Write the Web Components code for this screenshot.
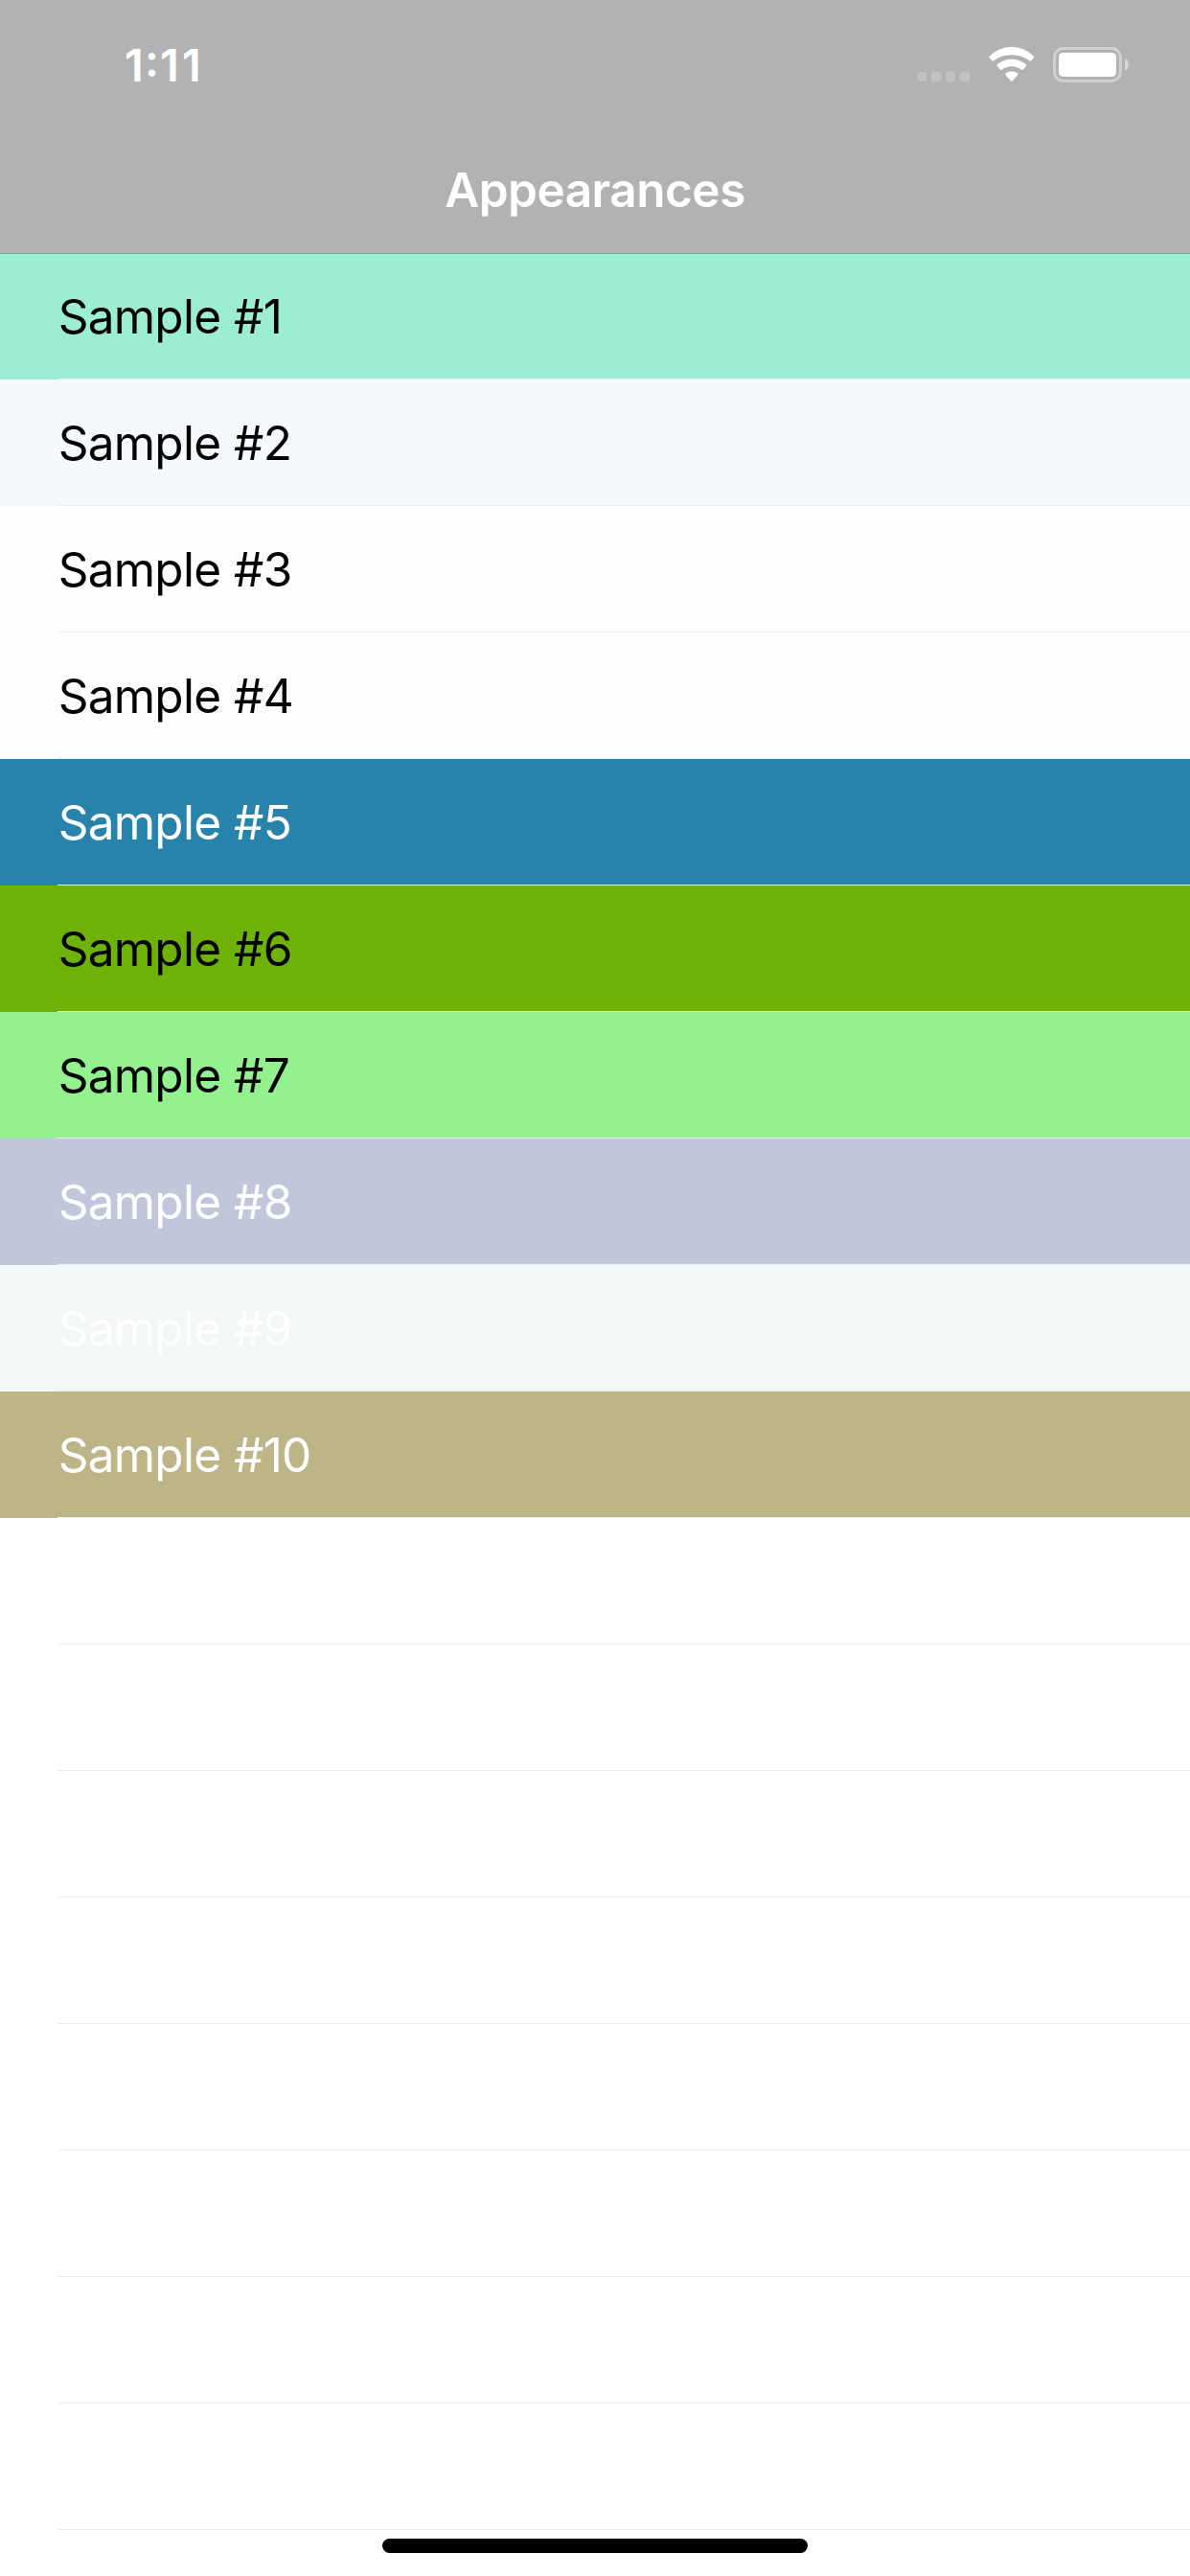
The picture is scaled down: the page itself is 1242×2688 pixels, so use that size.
<!DOCTYPE html>
<html lang="en">
<head>
<meta charset="utf-8">
<title>Appearances</title>
<style>
html,body{margin:0;height:100%;background:#fff}
body{font-family:Inter,"Liberation Sans",sans-serif}
</style>
</head>
<body>
<app-screen></app-screen>
<script>
const define = (name, html, setup) => customElements.define(name, class extends HTMLElement {
  connectedCallback() {
    if (this.shadowRoot) return;
    this.attachShadow({mode: 'open'}).innerHTML = html;
    if (setup) setup(this, this.shadowRoot);
  }
});

define('signal-dots', `<style>:host{display:flex;gap:5px}i{width:10px;height:10px;border-radius:3px;background:#c1c1c1}</style><i></i><i></i><i></i><i></i>`);

define('wifi-icon', `<style>:host{display:block;width:48px;height:37px}svg{display:block}</style>
<svg width="48" height="37" viewBox="0 0 48 37" fill="#fff" stroke="#fff" stroke-width="2" stroke-linejoin="round">
<path d="M1.2 10.4C14.2-2.1 33.4-2.1 46.4 10.4L43.3 13.8C32.2 4.9 15.4 4.9 4.3 13.8Z"/>
<path d="M9.4 19.1C17.6 12 30 12 38.2 19.1L35 23.1C28.2 18 19.4 18 12.6 23.1Z"/>
<path d="M18 28.3C21.2 25.8 26.4 25.8 29.6 28.3Q27.6 31.4 23.8 34.7Q20 31.4 18 28.3Z"/></svg>`);

define('battery-icon', `<style>:host{display:block;width:79px;height:37px}svg{display:block}</style>
<svg width="79" height="37" viewBox="0 0 79 37">
<rect x="1.5" y="1.5" width="69" height="34" rx="9.5" fill="none" stroke="#d0d0d0" stroke-width="3"/>
<rect x="6" y="6" width="60" height="25" rx="4.5" fill="#fff"/>
<path d="M75 12C80.3 14.3 80.3 22.7 75 25Z" fill="#d8d8d8"/></svg>`);

define('status-bar', `<style>
:host{display:flex;height:132px;box-sizing:border-box;padding:49px 64px 0 130px;align-items:flex-start;color:#fff}
time{font-size:46.8px;line-height:56px;height:37px;display:flex;align-items:center;font-weight:600;flex:1}
.hour{letter-spacing:1.1px}.min{letter-spacing:3.2px}.colon{position:relative;top:-5px}
signal-dots{margin:26px 20px 0 0}wifi-icon{margin-right:19.3px}
</style><time><span><span class="hour">1<span class="colon">:</span></span><span class="min">11</span></span></time><signal-dots></signal-dots><wifi-icon></wifi-icon><battery-icon></battery-icon>`);

define('nav-bar', `<style>
:host{display:flex;height:132px;align-items:center;justify-content:center;color:#fff}
h1{margin:0;font-size:49.5px;line-height:60px;font-weight:600;letter-spacing:-.5px}
</style><h1><slot></slot></h1>`);

define('top-bar', `<style>
:host{display:block;height:265px;margin-bottom:-1px;position:relative;box-sizing:border-box;background:linear-gradient(#b2b2b2,#b2b2b2) 0 0/100% 264px no-repeat;border-bottom:1px solid rgba(0,0,0,.3)}
</style><status-bar></status-bar><nav-bar>Appearances</nav-bar>`);

define('table-row', `<style>
:host{display:flex;height:132px;padding-left:60px;background:var(--bg,#fff);color:var(--ink,#000)}
div{flex:1;box-sizing:border-box;padding:36px 0 0 .7px;border-bottom:1px solid #ededed;font-size:49.5px;line-height:60px;letter-spacing:-.75px;word-spacing:.6px}
</style><div><slot></slot></div>`, (el) => {
  if (el.getAttribute('bg')) el.style.setProperty('--bg', el.getAttribute('bg'));
  if (el.getAttribute('ink')) el.style.setProperty('--ink', el.getAttribute('ink'));
});

define('home-indicator', `<style>:host{display:block;position:absolute;left:50%;bottom:24px;width:444px;height:15px;margin-left:-222px;border-radius:7.5px;background:#000}</style>`);

const samples = [['#9beed4','#000'],['#f4f9fc','#000'],['#fefefe','#000'],['#fdfdfd','#000'],['#2783aa','#fff'],['#6eb206','#000'],['#93f190','#000'],['#c2c6da','#fff'],['#f3f8f4','#fff'],['#bdb587','#fff']];
define('app-screen', `<style>
:host{display:block;position:relative;width:1242px;height:2688px;overflow:hidden;background:#fff}
</style><top-bar></top-bar><main>${samples.map(([bg, ink], i) => `<table-row bg="${bg}" ink="${ink}">Sample #${i + 1}</table-row>`).join('')}${'<table-row></table-row>'.repeat(8)}</main><home-indicator></home-indicator>`);
</script>
</body>
</html>
